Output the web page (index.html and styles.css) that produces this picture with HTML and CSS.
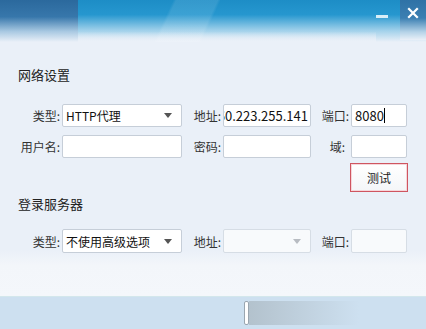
FILE: index.html
```html
<!DOCTYPE html>
<html lang="zh-CN">
<head>
  <meta charset="UTF-8">
  <meta name="viewport" content="width=device-width, initial-scale=1.0">
  <title>网络设置</title>
  <link rel="stylesheet" href="styles.css">
</head>
<body>
  <div class="window">
    <div class="titlebar">
      <div class="tb-left"></div>
      <div class="tb-mid"></div>
      <div class="tb-btns">
        <span class="btn-min"></span>
        <span class="btn-close">
          <svg width="12" height="12" viewBox="0 0 12 12">
            <path d="M2 2 L10 10 M10 2 L2 10" stroke="#fff" stroke-width="2.2" stroke-linecap="square"/>
          </svg>
        </span>
      </div>
    </div>

    <div class="content">
      <h2 class="section-title">网络设置</h2>
      <div class="form">
        <label>类型:</label>
        <div class="field select"><span class="val">HTTP代理</span><span class="arrow"></span></div>
        <label>地址:</label>
        <div class="field clip"><span class="val">60.223.255.141</span></div>
        <label>端口:</label>
        <div class="field"><span class="val">8080</span><span class="caret"></span></div>

        <label>用户名:</label>
        <div class="field"></div>
        <label>密码:</label>
        <div class="field"></div>
        <label class="short">域:</label>
        <div class="field"></div>
      </div>
      <div class="actions">
        <button class="btn-test">测试</button>
      </div>

      <h2 class="section-title second">登录服务器</h2>
      <div class="form tall">
        <label>类型:</label>
        <div class="field select"><span class="val">不使用高级选项</span><span class="arrow"></span></div>
        <label>地址:</label>
        <div class="field select disabled"><span class="arrow"></span></div>
        <label>端口:</label>
        <div class="field disabled"></div>
      </div>
    </div>

    <div class="statusbar">
      <span class="grip"></span>
      <span class="grip-shade"></span>
    </div>
  </div>
</body>
</html>
```

FILE: styles.css
```css
body {
  margin: 0;
  font-family: "Noto Sans CJK SC", "Liberation Sans", sans-serif;
  color: #333;
  font-size: 12px;
}
.window {
  width: 426px;
  height: 329px;
  overflow: hidden;
  background: #eaf0f8;
  display: flex;
  flex-direction: column;
}
.titlebar {
  height: 42px;
  display: flex;
  background: linear-gradient(to bottom, #1d8dc6 0%, #2697cf 35%, #9fd0ea 72%, #eaf0f8 100%);
}
.tb-left {
  width: 78px;
  background: linear-gradient(to bottom, #2b699d 0%, #3777ab 40%, #a9c9e2 75%, #eaf0f8 100%);
}
.tb-mid {
  flex: 1;
  background:
    linear-gradient(115deg, rgba(255,255,255,0) 30%, rgba(255,255,255,0.10) 31%, rgba(255,255,255,0.10) 44%, rgba(255,255,255,0) 45%),
    linear-gradient(to bottom, rgba(0,0,0,0) 75%, #eaf0f8 100%);
}
.tb-btns {
  display: flex;
  align-items: flex-start;
}
.btn-min {
  width: 12px;
  height: 3px;
  margin: 15px 12px 0 0;
  background: #d8eef8;
}
.btn-close {
  width: 26px;
  height: 40px;
  display: flex;
  justify-content: center;
  padding-top: 7px;
  box-sizing: border-box;
  background: linear-gradient(to bottom, #2f72a6 0%, #3b7fb2 45%, #b5d3e8 80%, #eaf0f8 100%);
}

.content {
  flex: 1;
  padding-left: 18px;
  background: linear-gradient(to bottom, #eaf0f8 0%, #eaf0f8 82%, #f3f6fa 88%, #f4f7fb 100%);
}
.section-title {
  margin: 25px 0 0 0;
  font-size: 13px;
  font-weight: normal;
  line-height: 16px;
  color: #222;
}
.section-title.second {
  margin-top: 4px;
}
.form {
  margin-top: 21px;
  display: grid;
  grid-template-columns: 44px 120px 41px 88px 40px 56px;
  grid-auto-rows: 23px;
  row-gap: 8px;
  align-items: center;
}
.form.tall {
  margin-top: 17px;
  grid-auto-rows: 24px;
}
.form label {
  text-align: right;
  padding-right: 2px;
  white-space: nowrap;
  color: #333;
}
.form label.short {
  padding-right: 6px;
}
.field {
  height: 100%;
  box-sizing: border-box;
  border: 1px solid #c6ced8;
  border-radius: 2px;
  background: #fff;
  display: flex;
  align-items: center;
  padding: 0 3px;
  font-size: 13px;
  color: #111;
  overflow: hidden;
  white-space: nowrap;
}
.field.clip {
  justify-content: flex-end;
  padding-right: 2px;
}
.field.select .val {
  flex: 1;
  font-size: 12px;
}
.arrow {
  margin-left: auto;
  margin-right: 6px;
  width: 0;
  height: 0;
  border-left: 4px solid transparent;
  border-right: 4px solid transparent;
  border-top: 5px solid #555;
}
.field.disabled {
  background: #f8fafc;
  border-color: #d6dde5;
}
.field.disabled .arrow {
  border-top-color: #b8bcc2;
}
.caret {
  width: 1px;
  height: 15px;
  background: #000;
}
.actions {
  display: flex;
  justify-content: flex-end;
  padding-right: 18px;
  margin-top: 5px;
}
.btn-test {
  width: 58px;
  height: 29px;
  border: 1px solid #cf5560;
  box-shadow: inset 0 0 0 1px #f6d6da;
  background: linear-gradient(to bottom, #ffffff, #f4f6f8);
  font-family: inherit;
  font-size: 12px;
  color: #222;
  padding: 0;
}

.statusbar {
  height: 33px;
  background: #cde0f0;
  border-top: 1px solid #d3e7ec;
  box-sizing: border-box;
  display: flex;
  align-items: center;
  padding-left: 244px;
}
.grip {
  width: 3px;
  height: 22px;
  background: #fff;
  border: 1px solid #9aa6b0;
  border-radius: 2px;
}
.grip-shade {
  width: 110px;
  height: 24px;
  background: linear-gradient(to right, #b3c2cd, rgba(205,224,240,0));
}
```
